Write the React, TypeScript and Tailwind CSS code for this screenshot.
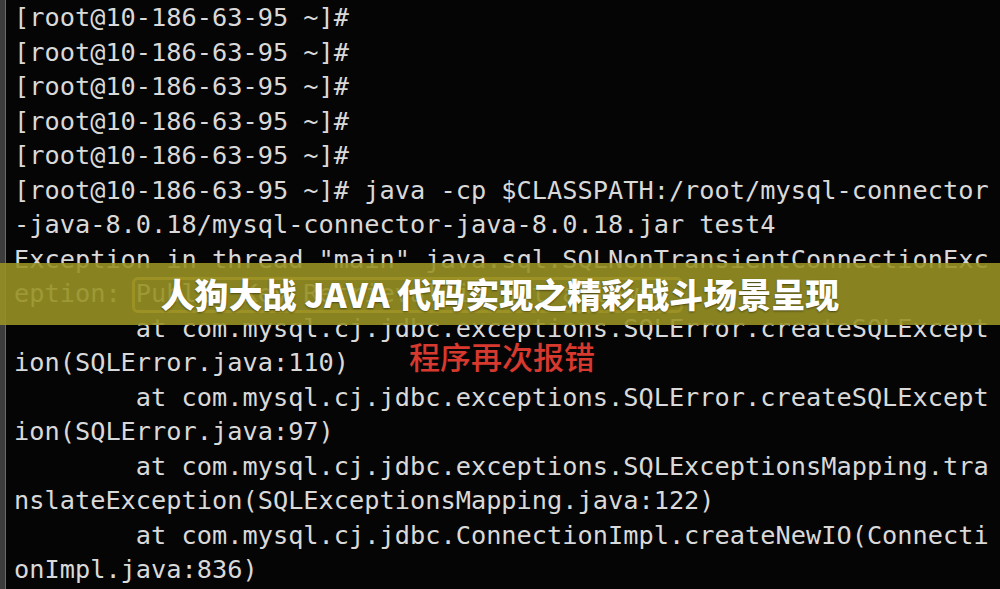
const lines = [
  '[root@10-186-63-95 ~]#',
  '[root@10-186-63-95 ~]#',
  '[root@10-186-63-95 ~]#',
  '[root@10-186-63-95 ~]#',
  '[root@10-186-63-95 ~]#',
  '[root@10-186-63-95 ~]# java -cp $CLASSPATH:/root/mysql-connector',
  '-java-8.0.18/mysql-connector-java-8.0.18.jar test4',
  'Exception in thread "main" java.sql.SQLNonTransientConnectionExc',
  'eption: Public Key Retrieval is not allowed',
  '        at com.mysql.cj.jdbc.exceptions.SQLError.createSQLExcept',
  'ion(SQLError.java:110)',
  '        at com.mysql.cj.jdbc.exceptions.SQLError.createSQLExcept',
  'ion(SQLError.java:97)',
  '        at com.mysql.cj.jdbc.exceptions.SQLExceptionsMapping.tra',
  'nslateException(SQLExceptionsMapping.java:122)',
  '        at com.mysql.cj.jdbc.ConnectionImpl.createNewIO(Connecti',
  'onImpl.java:836)',
];

export default function App() {
  return (
    <div className="relative flex h-[589px] w-[1000px] overflow-hidden bg-[#050505]">
      {/* window edge */}
      <div className="w-[6px] shrink-0 border-r border-[#6a6a6a] bg-[#3c3c3c]" />

      <div
        className="flex-1 pl-[8px] pt-[1px] text-[25.3px] leading-[34.5px] text-[#d9d9d9]"
        style={{ fontFamily: '"DejaVu Sans Mono", "Liberation Mono", monospace' }}
      >
        {lines.map((l, i) => (
          <div key={i} className="whitespace-pre">
            {l}
          </div>
        ))}
      </div>

      {/* highlight box around the error message */}
      <div className="absolute left-[132px] top-[277px] h-[36px] w-[551px] rounded-[6px] border-[3px] border-[#c98a2c]" />

      {/* red annotation */}
      <div
        className="absolute left-[409px] top-[338px] text-[31px] font-medium leading-[36px] text-[#d8392f]"
        style={{ fontFamily: '"Noto Sans CJK SC", sans-serif' }}
      >
        程序再次报错
      </div>

      {/* title banner */}
      <div className="absolute left-0 right-0 top-[263px] flex h-[62px] items-center justify-center bg-[#979124]/[0.9]">
        <h1
          className="text-[34px] font-black leading-none text-white [text-shadow:0_1px_2px_rgba(0,0,0,0.45)]"
          style={{ fontFamily: '"Noto Sans CJK SC", "Noto Sans", sans-serif' }}
        >
          人狗大战 JAVA 代码实现之精彩战斗场景呈现
        </h1>
      </div>
    </div>
  );
}
